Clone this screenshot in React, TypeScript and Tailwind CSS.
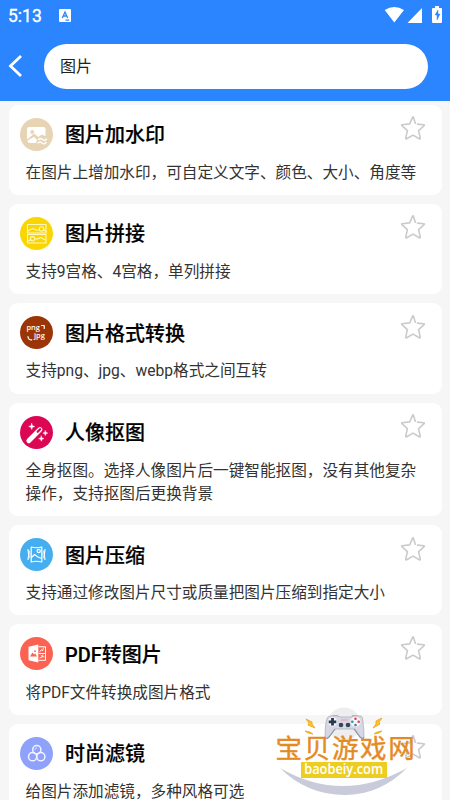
import type { ReactNode } from "react";

type Tool = { title: string; lines: string[]; color: string; icon: ReactNode };

const Disc = ({ color, children }: { color: string; children: ReactNode }) => (
  <svg viewBox="0 0 33 33" className="size-[33px] shrink-0" fill="none" stroke="#fff" strokeLinecap="round" strokeLinejoin="round">
    <circle cx="16.5" cy="16.5" r="16.5" fill={color} stroke="none" />
    {children}
  </svg>
);

const tools: Tool[] = [
  {
    title: "图片加水印",
    lines: ["在图片上增加水印，可自定义文字、颜色、大小、角度等"],
    color: "#e7d4b5",
    icon: (
      <>
        <path d="M9 9h14.500q2 0 2 2v7.200l-3.500-1.700-3.800 2.500-4-3.500L7 21.500V11q0-2 2-2z" fill="#fff" stroke="none" />
        <circle cx="12.200" cy="14" r="1.900" fill="#e7d4b5" stroke="none" />
        <path d="M7.500 22.500l6.500-3.600 3 2.700-1 3.400H9.500q-2 0-2-2z" fill="#fff" stroke="none" />
        <path d="M18.500 21.500q2-2 4 0t4-.5M18 25q2-2 4 0t4-.5" strokeWidth="1.400" />
      </>
    ),
  },
  {
    title: "图片拼接",
    lines: ["支持9宫格、4宫格，单列拼接"],
    color: "#fad502",
    icon: (
      <g strokeWidth="1.100" stroke="#fff8bd">
        <path d="M7.500 7.500h18.500v8.500H7.500zM7.500 17.500h18.500v8.500H7.500z" />
        <path d="M8 14l4.500-2.500 3.500 1.500h3.500M24 13l2 1.500M8 24l3-1.500M14.500 22h3l3-1.500 5 2.500" />
        <circle cx="21.500" cy="12" r="2.200" />
        <circle cx="12.500" cy="21.800" r="2.200" />
      </g>
    ),
  },
  {
    title: "图片格式转换",
    lines: ["支持png、jpg、webp格式之间互转"],
    color: "#9b3506",
    icon: (
      <>
        <text x="6.500" y="14" fontSize="7.400" fontWeight="600" fill="#fff" stroke="none" fontFamily="Open Sans, sans-serif">png</text>
        <text x="14" y="22.300" fontSize="7.400" fontWeight="600" fill="#fff" stroke="none" fontFamily="Open Sans, sans-serif">jpg</text>
        <path d="M21.500 9.500h2.700v3M8 20.500q.2 3.500 3.700 3.300" strokeWidth="1.200" />
      </>
    ),
  },
  {
    title: "人像抠图",
    lines: ["全身抠图。选择人像图片后一键智能抠图，没有其他复杂", "操作，支持抠图后更换背景"],
    color: "#db0755",
    icon: (
      <>
        <path d="M8.800 24.700L20 13.500" strokeWidth="4.800" />
        <path d="M17.700 15.700l2.400-2.400" stroke="#db0755" strokeWidth="2.300" />
        <path d="M11.700 7.500l.8 2.200 2.200.8-2.200.8-.8 2.200-.8-2.200-2.200-.8 2.200-.8zM25.300 14.700l.7 1.700 1.700.7-1.700.7-.7 1.700-.7-1.700-1.700-.7 1.700-.7zM21.300 20l.7 1.900 1.900.7-1.900.7-.7 1.900-.7-1.900-1.900-.7 1.900-.7z" fill="#fff" strokeWidth=".5" />
      </>
    ),
  },
  {
    title: "图片压缩",
    lines: ["支持通过修改图片尺寸或质量把图片压缩到指定大小"],
    color: "#45aef0",
    icon: (
      <g strokeWidth="1.200">
        <path d="M11.200 9q5.300 1.500 10.600 0v15q-5.300-1.500-10.600 0zM11.500 19.500l3-3 3.500 2.500 3.700 1.500" />
        <circle cx="18.700" cy="13" r="1.600" />
        <path d="M8 11.500q1.400 5 0 10M25 11.500q-1.400 5 0 10" />
        <path d="M9.500 13q1 3.500 0 7M23.500 13q-1 3.500 0 7" strokeWidth=".7" />
      </g>
    ),
  },
  {
    title: "PDF转图片",
    lines: ["将PDF文件转换成图片格式"],
    color: "#fb6252",
    icon: (
      <>
        <path d="M8.500 9.800l9.800-2.300v18l-9.800-2.300z" fill="#fff" stroke="none" />
        <path d="M19 9.800h6.500v13.500H19M19 16.500h6.500" strokeWidth="1" />
        <path d="M20 14.500l1.500-2 1 1.500 1-3M20 21q3 0 3-3M21 18.500q1 1.500 3 1.500" strokeWidth=".9" />
        <path d="M10 19.500l2.500-4 1.700 2 1-1.200 1.700 3.200z" fill="#fb6252" stroke="none" />
        <circle cx="15" cy="14.200" r=".9" fill="#fb6252" stroke="none" />
      </>
    ),
  },
  {
    title: "时尚滤镜",
    lines: ["给图片添加滤镜，多种风格可选"],
    color: "#8fa2fb",
    icon: (
      <g strokeWidth="1.500" stroke="#f3f3ff">
        <circle cx="16.800" cy="12.700" r="4.100" />
        <circle cx="12.600" cy="19.700" r="4.100" />
        <circle cx="20.800" cy="19.700" r="4.100" />
        <path d="M14.800 12.500q.3-1.600 1.800-1.700" strokeWidth=".8" />
      </g>
    ),
  },
];

const Star = () => (
  <svg viewBox="0 0 26 26" className="absolute right-[15.500px] top-[10.500px] size-[26px]" fill="none" stroke="#cbcbcb" strokeWidth="1.600" strokeLinejoin="round" strokeLinecap="round">
    <path d="M15.300 8.300L13.500 2.400q-.5-1-1 0L9.700 8.900 2.200 9.700q-1 .3-.3 1l5.500 4.900-1.700 7.600q0 1 1 .6L13 20.100l6.300 3.700q1 .4 1-.6l-1.700-7.600 5.500-4.900q.7-.7-.3-1l-6.300-.6" />
  </svg>
);

const Card = ({ tool }: { tool: Tool }) => (
  <article className="relative shrink-0 rounded-[9px] bg-white pb-[11.200px] pt-[13px]">
    <div className="flex h-[33px] items-center gap-[12px] pl-[11.500px]">
      <Disc color={tool.color}>{tool.icon}</Disc>
      <h2 className="whitespace-nowrap pt-[3px] text-[20px] font-medium leading-[33px] text-black [-webkit-text-stroke:0.200px_#000]">{tool.title}</h2>
    </div>
    <div className="mt-[10.200px] whitespace-nowrap pl-[17px] text-[15.630px] leading-[23px] text-[#333]">
      {tool.lines.map((line) => (
        <p key={line}>{line}</p>
      ))}
    </div>
    <Star />
  </article>
);

const Watermark = () => (
  <div className="absolute left-[275px] top-[700px] h-[100px] w-[145px]">
    <svg viewBox="0 0 145 100" className="absolute inset-0 size-full">
      <circle cx="69" cy="24" r="16.500" fill="#eeeeee" />
      <path d="M5 68q62 36 127 0-27 27-62 27Q32 95 5 68z" fill="#c9cada" />
      <path d="M57 17l1-2h5v3zM77 18v-3h5l2 2z" fill="#f0b63d" />
      <path d="M55 16q7-1 11 1h9q5-2 11-1 2 1 2 6 1 8 1 15-1 3-4 0l-5-8H60l-6 8q-3 3-4 0 0-7 1-15 1-6 4-6z" fill="#d8d8e4" stroke="#a8a9b8" strokeWidth=".7" />
      <path d="M60 29l-6 8q-3 3-4 0M79 29l6 8q3 3 4 0" fill="none" stroke="#9295aa" strokeWidth="1.200" />
      <circle cx="57.500" cy="21.800" r="4.600" fill="#f5f5fa" />
      <circle cx="80.500" cy="21.800" r="5" fill="#f5f5fa" />
      <path d="M57.500 18v7.600M53.700 21.800h7.600" stroke="#263a4c" strokeWidth="2.800" />
      <circle cx="66" cy="25" r="2.300" fill="#34465a" />
      <circle cx="73" cy="25" r="2.300" fill="#34465a" />
      <g fill="#db4054"><circle cx="80.500" cy="18.700" r="1.300" /><circle cx="83.700" cy="21.800" r="1.300" /></g>
      <g fill="#3d8994"><circle cx="77.300" cy="21.800" r="1.300" /><circle cx="80.500" cy="25" r="1.300" /></g>
      <path d="M66 20h7" stroke="#eb9aab" />
      <path d="M31 19l6 3v2l3 4-7-3 1-2zM30 31l5 1 3 2-5-1zM107 18l-6 3v3l-3 4 7-4-1-2zM107 31l-5 1-3 2 5-1z" fill="#ffc51f" stroke="#eaa219" strokeWidth=".8" />
    </svg>
    <div className="absolute left-[0.500px] top-[35px] whitespace-nowrap text-[26.500px] font-normal leading-[27px] tracking-[1.700px] text-[#e58a22] [-webkit-text-stroke:0.400px_#e58a22]">宝贝游戏网</div>
    <div className="absolute left-[26px] top-[62px] flex h-[16px] w-[85.500px] justify-center bg-[#edce20] font-['Open_Sans',sans-serif] text-[14.500px] font-semibold leading-[14px] text-white">
      <span className="block origin-center scale-x-[0.885]">baobeiy.com</span>
    </div>
  </div>
);

export default function App() {
  return (
    <main className="relative flex h-[800px] w-[450px] flex-col overflow-hidden bg-[#f6f6f6] font-[Roboto,'Noto_Sans_CJK_SC',sans-serif]">
      <header className="h-[101px] shrink-0 bg-[#2a85ff]">
        <div className="flex h-[43.500px] items-start pl-[8px] text-white">
          <time className="w-[51px] pt-[6px] text-[17.500px] font-normal leading-[20px] [-webkit-text-stroke:0.350px_#fff]">5:13</time>
          <svg viewBox="0 0 12 13" className="mt-[8.500px] h-[13px] w-[12px]">
            <rect width="12" height="13" rx="1" fill="#fff" />
            <path d="M3.300 9L6 3l2.700 6M4.300 7h3.400M6.500 11.200h3.700" fill="none" stroke="#2a85ff" strokeWidth="1.300" />
          </svg>
          <svg viewBox="0 0 58 18" className="ml-auto mr-[8px] mt-[6px] h-[18px] w-[58px]" fill="#fff">
            <path d="M.7 4Q10.300-2 20 4L10.300 16.500zM38 2v15H23.500zM48 3q0-1 1-1h2V0h4v2h2q1 0 1 1v13q0 1-1 1h-8q-1 0-1-1z" />
            <path d="M54 4l-3 5h2v5l3-6h-2z" fill="#2a85ff" stroke="#2a85ff" strokeWidth=".4" />
          </svg>
        </div>
        <div className="flex h-[45px] items-center">
          <svg viewBox="0 0 14 24" className="ml-[8px] mr-[22px] h-[24px] w-[14px]" fill="none" stroke="#fff" strokeWidth="2.800">
            <path d="M13 2L2.500 12 13 22" />
          </svg>
          <div className="h-[45px] w-[383.500px] rounded-full bg-white pl-[16px] text-[16px] leading-[45px] text-[#222]">图片</div>
        </div>
      </header>
      <section className="flex min-h-0 flex-1 flex-col gap-[9px] px-[8.500px] pt-[3.500px]">
        {tools.map((tool) => (
          <Card key={tool.title} tool={tool} />
        ))}
      </section>
      <Watermark />
    </main>
  );
}
